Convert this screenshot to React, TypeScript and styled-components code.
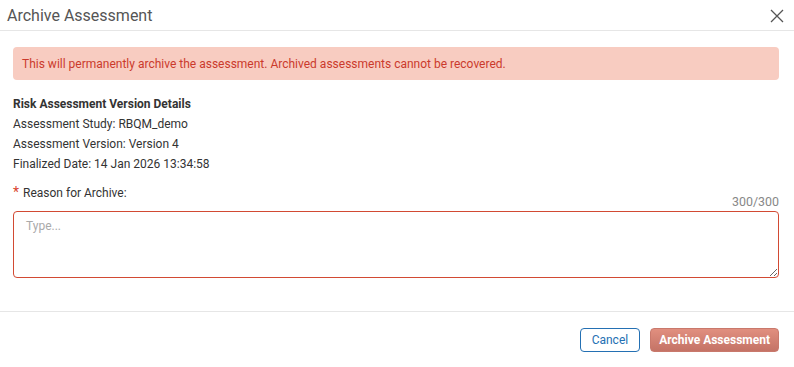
import styled, { createGlobalStyle } from "styled-components";

const GlobalStyle = createGlobalStyle`
  body {
    margin: 0;
    background: #fff;
    font-family: Roboto, "Liberation Sans", sans-serif;
  }
`;

const Dialog = styled.div`
  width: 794px;
  height: 367px;
  background: #fff;
  display: flex;
  flex-direction: column;
`;

const Header = styled.div`
  height: 31px;
  box-sizing: border-box;
  border-bottom: 1px solid #e6e6e6;
  display: flex;
  align-items: center;
  justify-content: space-between;
  padding: 0 10px 0 7px;
`;

const Title = styled.h2`
  margin: 0;
  font-size: 16px;
  font-weight: 400;
  color: #555;
  line-height: 31px;
`;

const CloseButton = styled.button`
  border: 0;
  background: none;
  padding: 0;
  width: 14px;
  height: 14px;
  display: flex;
  cursor: pointer;
  margin-top: 1px;
`;

const Body = styled.div`
  padding: 16px 15px 0 13px;
  display: flex;
  flex-direction: column;
`;

const Alert = styled.div`
  height: 33px;
  box-sizing: border-box;
  background: #f8ccc1;
  border-radius: 4px;
  color: #cb3a2c;
  font-size: 12px;
  display: flex;
  align-items: center;
  padding: 0 9px;
`;

const Details = styled.div`
  margin-top: 14px;
  font-size: 12px;
  line-height: 20px;
  color: #333;
`;

const DetailTitle = styled.div`
  font-weight: 700;
`;

const Label = styled.label`
  margin-top: 8px;
  font-size: 12px;
  line-height: 20px;
  color: #333;
`;

const Star = styled.span`
  color: #d9442f;
  font-size: 14px;
  margin-right: 4px;
`;

const Counter = styled.div`
  font-size: 12.4px;
  line-height: 14px;
  color: #888;
  text-align: right;
  margin-top: -8px;
`;

const TextArea = styled.textarea`
  margin-top: 2px;
  height: 67px;
  box-sizing: border-box;
  border: 1px solid #d24a33;
  border-radius: 4px;
  padding: 7px 12px;
  font-family: inherit;
  font-size: 12px;
  color: #333;
  outline: none;
  &::placeholder {
    color: #aaa;
  }
`;

const Footer = styled.div`
  margin-top: 33px;
  border-top: 1px solid #e6e6e6;
  padding: 16px 15px 0;
  display: flex;
  justify-content: flex-end;
  gap: 10px;
`;

const Button = styled.button<{ $primary?: boolean }>`
  height: 24px;
  box-sizing: border-box;
  border-radius: 4px;
  font-family: inherit;
  font-size: 12px;
  padding: 0 ${(p) => (p.$primary ? "8px" : "11px")};
  cursor: pointer;
  border: 1px solid ${(p) => (p.$primary ? "#c9796c" : "#2470b3")};
  background: ${(p) =>
    p.$primary ? "linear-gradient(#e18f7f, #c47366)" : "#fff"};
  color: ${(p) => (p.$primary ? "#fff" : "#2470b3")};
  font-weight: ${(p) => (p.$primary ? 700 : 400)};
`;

export default function App() {
  return (
    <>
      <GlobalStyle />
      <Dialog>
        <Header>
          <Title>Archive Assessment</Title>
          <CloseButton aria-label="Close">
            <svg width="14" height="14" viewBox="0 0 14 14">
              <path d="M1 1L13 13M13 1L1 13" stroke="#555" strokeWidth="1.3" />
            </svg>
          </CloseButton>
        </Header>
        <Body>
          <Alert>
            This will permanently archive the assessment. Archived assessments
            cannot be recovered.
          </Alert>
          <Details>
            <DetailTitle>Risk Assessment Version Details</DetailTitle>
            <div>Assessment Study: RBQM_demo</div>
            <div>Assessment Version: Version 4</div>
            <div>Finalized Date: 14 Jan 2026 13:34:58</div>
          </Details>
          <Label>
            <Star>*</Star>Reason for Archive:
          </Label>
          <Counter>300/300</Counter>
          <TextArea placeholder="Type..." />
        </Body>
        <Footer>
          <Button>Cancel</Button>
          <Button $primary>Archive Assessment</Button>
        </Footer>
      </Dialog>
    </>
  );
}
